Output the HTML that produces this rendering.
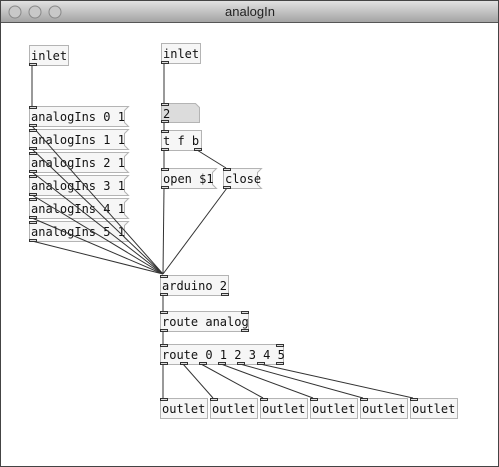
<!DOCTYPE html>
<html><head><meta charset="utf-8"><style>
html,body{margin:0;padding:0;width:499px;height:467px;overflow:hidden;background:#fff}
svg{display:block}
text{font-family:"DejaVu Sans Mono","Liberation Mono",monospace;font-size:12px;fill:#111}
</style></head><body>
<svg width="499" height="467" viewBox="0 0 499 467">
<defs><linearGradient id="tb" x1="0" y1="0" x2="0" y2="1"><stop offset="0" stop-color="#e4e4e4"/><stop offset="1" stop-color="#a4a4a4"/></linearGradient></defs>
<rect x="0" y="0" width="499" height="467" fill="#fff"/>
<rect x="0" y="0" width="499" height="22" fill="url(#tb)"/>
<line x1="0" y1="22.5" x2="499" y2="22.5" stroke="#555"/>
<rect x="0.5" y="0.5" width="498" height="466" fill="none" stroke="#444"/>
<circle cx="15" cy="12" r="6" fill="#c8c8c8" stroke="#888"/>
<circle cx="35" cy="12" r="6" fill="#c8c8c8" stroke="#888"/>
<circle cx="55" cy="12" r="6" fill="#c8c8c8" stroke="#888"/>
<text x="250" y="16" text-anchor="middle" style="font-family:'Liberation Sans',sans-serif;font-size:13px;fill:#222">analogIn</text>

<g fill="#f6f6f6" stroke="#b4b4b4">
<rect x="29.5" y="45.5" width="39" height="20"/>
<rect x="161.5" y="43.5" width="39" height="20"/>
<path d="M29.5 106.5H128.5L124.5 110.5V122.5L128.5 126.5H29.5Z"/>
<path d="M29.5 129.5H128.5L124.5 133.5V145.5L128.5 149.5H29.5Z"/>
<path d="M29.5 152.5H128.5L124.5 156.5V168.5L128.5 172.5H29.5Z"/>
<path d="M29.5 175.5H128.5L124.5 179.5V191.5L128.5 195.5H29.5Z"/>
<path d="M29.5 198.5H128.5L124.5 202.5V214.5L128.5 218.5H29.5Z"/>
<path d="M29.5 221.5H128.5L124.5 225.5V237.5L128.5 241.5H29.5Z"/>
<path d="M161.5 103.5H195.5L199.5 107.5V122.5H161.5Z" fill="#dcdcdc"/>
<rect x="161.5" y="130.5" width="40" height="20"/>
<path d="M161.5 168.5H216.5L212.5 172.5V184.5L216.5 188.5H161.5Z"/>
<path d="M223.5 168.5H261.5L257.5 172.5V184.5L261.5 188.5H223.5Z"/>
<rect x="160.5" y="275.5" width="68" height="20"/>
<rect x="160.5" y="311.5" width="88" height="20"/>
<rect x="160.5" y="344.5" width="123" height="20"/>
<rect x="160.5" y="398.5" width="47" height="20"/>
<rect x="210.5" y="398.5" width="47" height="20"/>
<rect x="260.5" y="398.5" width="47" height="20"/>
<rect x="310.5" y="398.5" width="47" height="20"/>
<rect x="360.5" y="398.5" width="47" height="20"/>
<rect x="410.5" y="398.5" width="47" height="20"/>
</g>

<text x="31" y="60">inlet</text>
<text x="163" y="58">inlet</text>
<text x="31" y="121">analogIns 0 1</text>
<text x="31" y="144">analogIns 1 1</text>
<text x="31" y="167">analogIns 2 1</text>
<text x="31" y="190">analogIns 3 1</text>
<text x="31" y="213">analogIns 4 1</text>
<text x="31" y="236">analogIns 5 1</text>
<text x="163" y="118">2</text>
<text x="163" y="145">t f b</text>
<text x="163" y="183">open $1</text>
<text x="225" y="183">close</text>
<text x="162" y="290">arduino 2</text>
<text x="162" y="326">route analog</text>
<text x="162" y="359">route 0 1 2 3 4 5</text>
<text x="162" y="413">outlet</text>
<text x="212" y="413">outlet</text>
<text x="262" y="413">outlet</text>
<text x="312" y="413">outlet</text>
<text x="362" y="413">outlet</text>
<text x="412" y="413">outlet</text>

<g stroke="#333" stroke-width="1" fill="none">
<line x1="32" y1="65" x2="32" y2="106"/>
<line x1="164" y1="63" x2="164" y2="103"/>
<line x1="164" y1="122" x2="164" y2="130"/>
<line x1="164" y1="150" x2="164" y2="168"/>
<line x1="197" y1="150" x2="226" y2="168"/>
<line x1="32" y1="126" x2="163" y2="274"/>
<line x1="32" y1="149" x2="163" y2="274"/>
<line x1="32" y1="172" x2="163" y2="274"/>
<line x1="32" y1="195" x2="163" y2="274"/>
<line x1="32" y1="218" x2="163" y2="274"/>
<line x1="32" y1="241" x2="163" y2="274"/>
<line x1="164" y1="188" x2="163" y2="274"/>
<line x1="227" y1="188" x2="163" y2="274"/>
<line x1="163" y1="295" x2="163" y2="311"/>
<line x1="163" y1="331" x2="163" y2="344"/>
<line x1="163" y1="364" x2="163" y2="398"/>
<line x1="183" y1="364" x2="213" y2="398"/>
<line x1="201" y1="364" x2="263" y2="398"/>
<line x1="221" y1="364" x2="313" y2="398"/>
<line x1="240" y1="364" x2="363" y2="398"/>
<line x1="260" y1="364" x2="413" y2="398"/>
</g>

<g fill="#ddd" stroke="#333">
<rect x="29.5" y="63.5" width="7" height="2"/>
<rect x="161.5" y="61.5" width="7" height="2"/>
<rect x="29.5" y="106.5" width="7" height="2"/><rect x="29.5" y="124.5" width="7" height="2"/>
<rect x="29.5" y="129.5" width="7" height="2"/><rect x="29.5" y="147.5" width="7" height="2"/>
<rect x="29.5" y="152.5" width="7" height="2"/><rect x="29.5" y="170.5" width="7" height="2"/>
<rect x="29.5" y="175.5" width="7" height="2"/><rect x="29.5" y="193.5" width="7" height="2"/>
<rect x="29.5" y="198.5" width="7" height="2"/><rect x="29.5" y="216.5" width="7" height="2"/>
<rect x="29.5" y="221.5" width="7" height="2"/><rect x="29.5" y="239.5" width="7" height="2"/>
<rect x="161.5" y="103.5" width="7" height="2"/><rect x="161.5" y="120.5" width="7" height="2"/>
<rect x="161.5" y="130.5" width="7" height="2"/><rect x="161.5" y="148.5" width="7" height="2"/><rect x="194.5" y="148.5" width="7" height="2"/>
<rect x="161.5" y="168.5" width="7" height="2"/><rect x="161.5" y="186.5" width="7" height="2"/>
<rect x="223.5" y="168.5" width="7" height="2"/><rect x="223.5" y="186.5" width="7" height="2"/>
<rect x="160.5" y="275.5" width="7" height="2"/><rect x="160.5" y="293.5" width="7" height="2"/><rect x="221.5" y="293.5" width="7" height="2"/>
<rect x="160.5" y="311.5" width="7" height="2"/><rect x="241.5" y="311.5" width="7" height="2"/><rect x="160.5" y="329.5" width="7" height="2"/><rect x="241.5" y="329.5" width="7" height="2"/>
<rect x="160.5" y="344.5" width="7" height="2"/><rect x="276.5" y="344.5" width="7" height="2"/>
<rect x="160.5" y="362.5" width="7" height="2"/><rect x="180.5" y="362.5" width="7" height="2"/><rect x="199.5" y="362.5" width="7" height="2"/><rect x="218.5" y="362.5" width="7" height="2"/><rect x="237.5" y="362.5" width="7" height="2"/><rect x="257.5" y="362.5" width="7" height="2"/><rect x="276.5" y="362.5" width="7" height="2"/>
<rect x="160.5" y="398.5" width="7" height="2"/><rect x="210.5" y="398.5" width="7" height="2"/><rect x="260.5" y="398.5" width="7" height="2"/><rect x="310.5" y="398.5" width="7" height="2"/><rect x="360.5" y="398.5" width="7" height="2"/><rect x="410.5" y="398.5" width="7" height="2"/>
</g>
</svg>
</body></html>
